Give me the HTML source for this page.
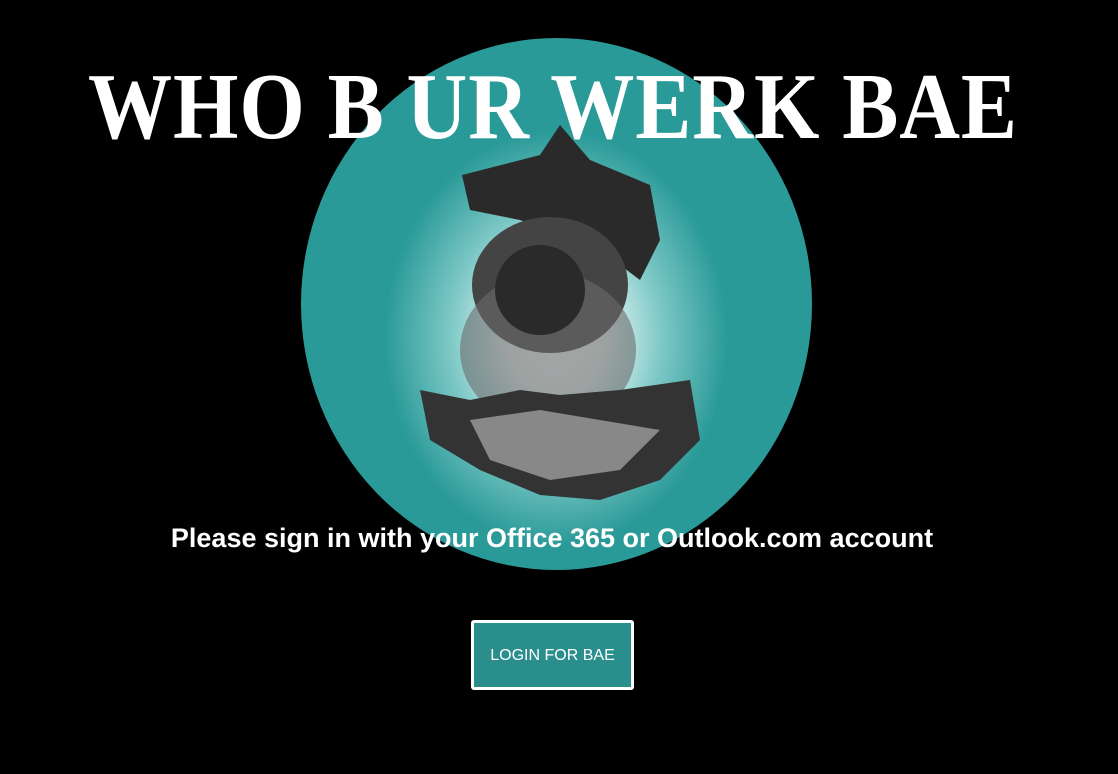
<!DOCTYPE html>
<html><head><style>
html,body{margin:0;padding:0;background:#000;width:1118px;height:774px;overflow:hidden;position:relative;font-family:"Liberation Sans",sans-serif}
.circle{position:absolute;left:301px;top:38px;width:511px;height:532px;border-radius:50%;background:radial-gradient(ellipse 190px 230px at 255px 300px,#fff 0%,#e8f6f5 25%,#7fc9c7 55%,#2a9a98 90%)}
.title{position:absolute;left:88px;top:59px;white-space:nowrap;color:#fff;font-family:"Liberation Serif",serif;font-weight:bold;font-size:94px;line-height:96px;letter-spacing:1px;transform-origin:0 0;transform:scale(0.895,1);}
.sub{position:absolute;left:0;width:1104px;top:520px;text-align:center;color:#fff;font-weight:bold;font-size:27px;line-height:36px}
.btn{position:absolute;left:471px;top:620px;width:157px;height:64px;border:3px solid #fff;border-radius:3px;background:#2a8f8c;color:#fff;font-size:16px;text-align:center;line-height:66px}
</style></head><body>
<div class="circle"></div>
<svg style="position:absolute;left:0;top:0" width="1118" height="774">
<path d="M462 175 L540 155 L560 125 L590 160 L650 185 L660 240 L640 280 L600 250 L520 220 L470 210 Z" fill="#2a2a2a"/>
<ellipse cx="550" cy="285" rx="78" ry="68" fill="#444"/>
<ellipse cx="548" cy="350" rx="88" ry="78" fill="#6a6a6a" opacity=".6"/>
<ellipse cx="540" cy="290" rx="45" ry="45" fill="#2a2a2a"/>
<path d="M420 390 L470 400 L520 390 L560 395 L620 390 L690 380 L700 440 L660 480 L600 500 L540 495 L480 470 L430 440 Z" fill="#333"/>
<path d="M470 420 L540 410 L600 420 L660 430 L620 470 L550 480 L490 460 Z" fill="#888"/>
</svg>
<div class="title">WHO B UR WERK BAE</div>
<div class="sub">Please sign in with your Office 365 or Outlook.com account</div>
<div class="btn">LOGIN FOR BAE</div>
</body></html>
